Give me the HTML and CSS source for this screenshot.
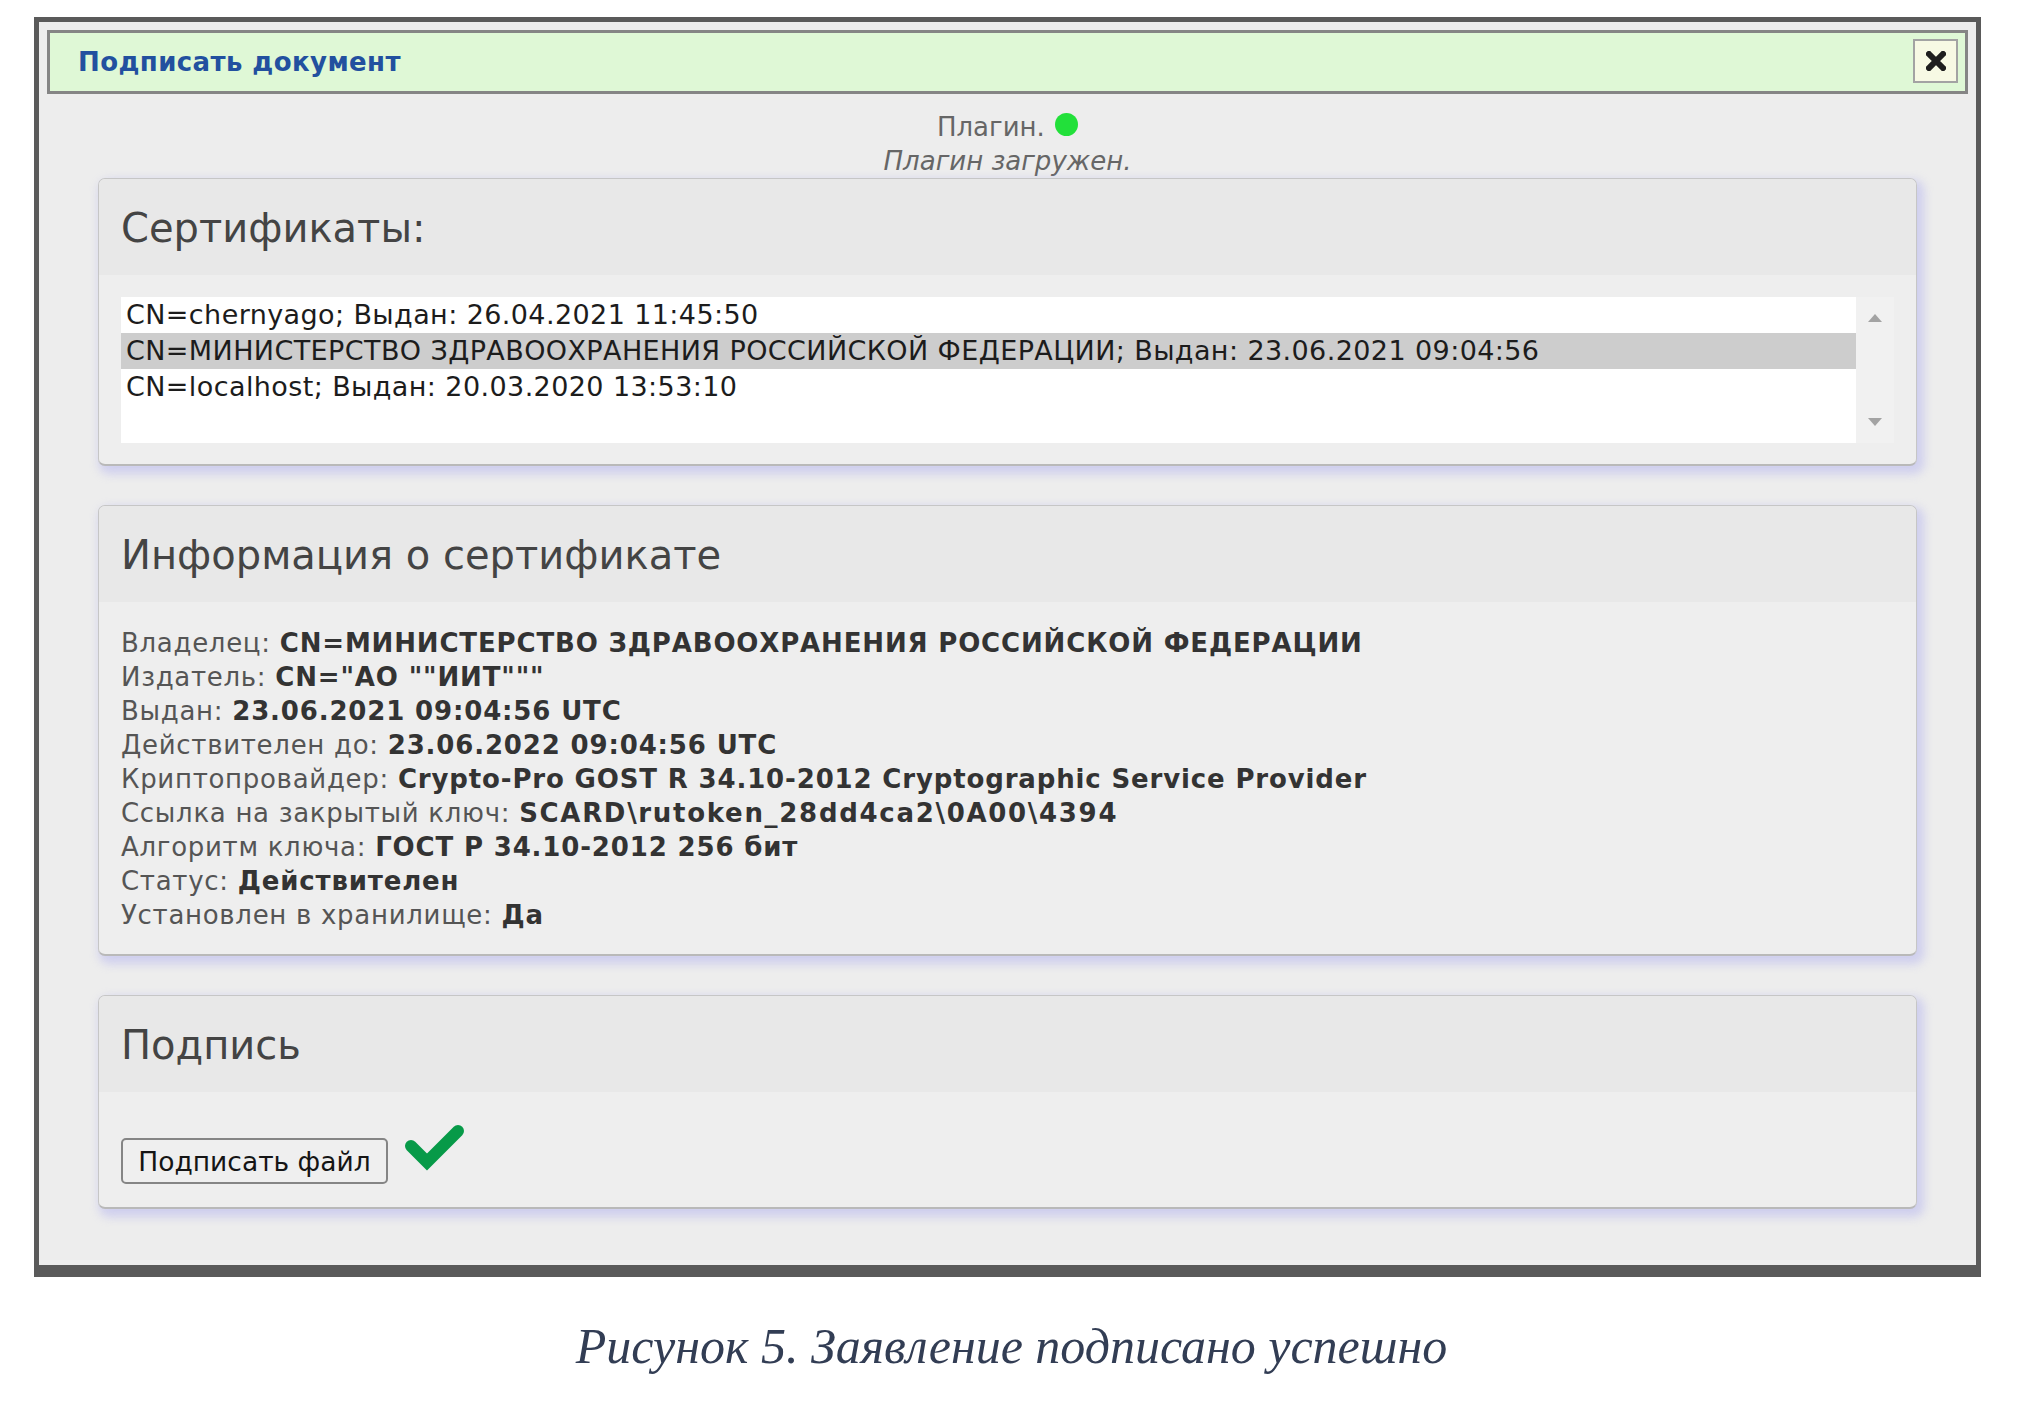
FILE: index.html
```html
<!DOCTYPE html>
<html lang="ru">
<head>
    <meta charset="UTF-8">
    <title>Подписать документ</title>
    <link rel="stylesheet" href="styles.css">
</head>
<body>
    <div class="window">
        <div class="title-bar">
            <span class="title">Подписать документ</span>
            <button class="close-btn" title="Закрыть">
                <svg width="20" height="20" viewBox="0 0 20 20">
                    <path d="M3 3 L17 17 M17 3 L3 17" stroke="#1e1e1e" stroke-width="6" stroke-linecap="square"/>
                </svg>
            </button>
        </div>

        <div class="plugin-status">
            <div>Плагин. <span class="status-dot"></span></div>
            <div class="plugin-note">Плагин загружен.</div>
        </div>

        <div class="panels">
            <div class="panel">
                <div class="panel-head"><h2>Сертификаты:</h2></div>
                <div class="panel-body certs-body">
                    <div class="cert-list">
                        <div class="cert-rows">
                            <div class="cert-row">CN=chernyago; Выдан: 26.04.2021 11:45:50</div>
                            <div class="cert-row selected">CN=МИНИСТЕРСТВО ЗДРАВООХРАНЕНИЯ РОССИЙСКОЙ ФЕДЕРАЦИИ; Выдан: 23.06.2021 09:04:56</div>
                            <div class="cert-row">CN=localhost; Выдан: 20.03.2020 13:53:10</div>
                        </div>
                        <div class="scrollbar">
                            <span class="arrow up"></span>
                            <span class="arrow down"></span>
                        </div>
                    </div>
                </div>
            </div>

            <div class="panel">
                <div class="panel-head"><h2>Информация о сертификате</h2></div>
                <div class="panel-body info-body">
                    <div class="info-line">Владелец: <b>CN=МИНИСТЕРСТВО ЗДРАВООХРАНЕНИЯ РОССИЙСКОЙ ФЕДЕРАЦИИ</b></div>
                    <div class="info-line">Издатель: <b>CN="АО ""ИИТ"""</b></div>
                    <div class="info-line">Выдан: <b>23.06.2021 09:04:56 UTC</b></div>
                    <div class="info-line">Действителен до: <b>23.06.2022 09:04:56 UTC</b></div>
                    <div class="info-line">Криптопровайдер: <b>Crypto-Pro GOST R 34.10-2012 Cryptographic Service Provider</b></div>
                    <div class="info-line">Ссылка на закрытый ключ: <b class="key-path">SCARD\rutoken_28dd4ca2\0A00\4394</b></div>
                    <div class="info-line">Алгоритм ключа: <b>ГОСТ Р 34.10-2012 256 бит</b></div>
                    <div class="info-line">Статус: <b>Действителен</b></div>
                    <div class="info-line">Установлен в хранилище: <b>Да</b></div>
                </div>
            </div>

            <div class="panel">
                <div class="panel-head"><h2>Подпись</h2></div>
                <div class="panel-body sign-body">
                    <button class="sign-btn">Подписать файл</button>
                    <svg class="check" width="63" height="52" viewBox="0 0 63 52">
                        <path d="M8 22 L24 38 L55 7" fill="none" stroke="#079a48" stroke-width="12" stroke-linecap="round" stroke-linejoin="miter"/>
                    </svg>
                </div>
            </div>
        </div>
    </div>

    <p class="caption">Рисунок 5. Заявление подписано успешно</p>
</body>
</html>
```

FILE: styles.css
```css
body {
    margin: 0;
    background: #fff;
    font-family: "DejaVu Sans", Verdana, sans-serif;
}
.window {
    box-sizing: border-box;
    width: 1947px;
    margin: 17px 0 0 34px;
    border: 5px solid #5a5a5a;
    border-bottom-width: 12px;
    background: #ededed;
    padding-bottom: 56px;
}
.title-bar {
    box-sizing: border-box;
    height: 64px;
    margin: 8px 8px 0;
    border: 3px solid #858585;
    background: #dff8d6;
    padding-left: 28px;
    display: flex;
    align-items: center;
    justify-content: space-between;
}
.title {
    color: #22509f;
    font-weight: bold;
    font-size: 26px;
    line-height: 30px;
    letter-spacing: 0.4px;
}
.close-btn {
    box-sizing: border-box;
    width: 45px;
    height: 44px;
    margin-right: 7px;
    margin-top: -3px;
    border: 2px solid #a3a3a3;
    background: #f7f9e4;
    padding: 0;
    display: flex;
    align-items: center;
    justify-content: center;
}
.plugin-status {
    margin-top: 16px;
    text-align: center;
    color: #666;
    font-size: 26px;
    line-height: 34px;
}
.plugin-note {
    font-style: italic;
}
.status-dot {
    display: inline-block;
    width: 23px;
    height: 23px;
    margin-left: 2px;
    border-radius: 50%;
    background: #22e03a;
}
.panels {
    display: flex;
    flex-direction: column;
    gap: 39px;
    margin: 0 59px;
}
.panel {
    border: 1px solid #c6c6c6;
    border-bottom: 2px solid #b9b9b9;
    border-radius: 7px;
    background: #eeeeee;
    box-shadow: 4px 5px 10px 3px rgba(170, 170, 240, 0.45);
    overflow: hidden;
}
.panel-head {
    background: #e8e8e8;
    padding: 26px 22px 23px;
}
.panel-head h2 {
    margin: 0;
    font-size: 40px;
    line-height: 47px;
    font-weight: normal;
    color: #444;
}
.certs-body {
    padding: 22px 22px 21px;
}
.cert-list {
    display: flex;
    height: 146px;
    background: #fff;
}
.cert-rows {
    flex: 1;
}
.cert-row {
    height: 36px;
    line-height: 36px;
    padding-left: 5px;
    font-size: 27px;
    letter-spacing: 0.4px;
    color: #1c1c1c;
    white-space: nowrap;
}
.cert-row.selected {
    background: #cdcdcd;
}
.scrollbar {
    width: 38px;
    background: #f1f1f1;
    position: relative;
}
.arrow {
    position: absolute;
    left: 12px;
    width: 0;
    height: 0;
    border-left: 7px solid transparent;
    border-right: 7px solid transparent;
}
.arrow.up {
    top: 17px;
    border-bottom: 8px solid #a3a3a3;
}
.arrow.down {
    bottom: 17px;
    border-top: 8px solid #a3a3a3;
}
.info-body {
    padding: 24px 22px 22px;
}
.info-line {
    font-size: 26px;
    line-height: 34px;
    letter-spacing: 0.7px;
    color: #555;
    white-space: nowrap;
}
.info-line b {
    color: #333;
    letter-spacing: 0.85px;
}
.info-line b.key-path {
    letter-spacing: 1.7px;
}
.sign-body {
    padding: 34px 22px 23px;
    display: flex;
    align-items: flex-start;
    gap: 15px;
}
.sign-btn {
    box-sizing: border-box;
    width: 267px;
    height: 46px;
    margin-top: 12px;
    border: 2px solid #858585;
    border-radius: 5px;
    background: #efefef;
    font-family: "DejaVu Sans", Verdana, sans-serif;
    font-size: 26.5px;
    color: #151515;
    padding: 0;
}
.check {
    display: block;
    margin-top: -2px;
}
.caption {
    margin: 40px 0 0;
    text-align: center;
    font-family: "Liberation Serif", "Times New Roman", serif;
    font-style: italic;
    font-size: 50px;
    line-height: 58px;
    color: #323d54;
}
```
